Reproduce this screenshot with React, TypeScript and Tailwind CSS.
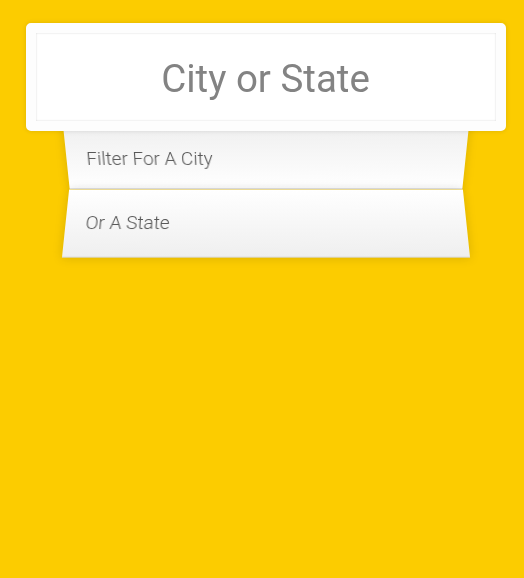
export default function App() {
  return (
    <div className="min-h-[578px] w-full bg-[#fccc00] pt-[13px] pl-[7px]" style={{ fontFamily: '"Liberation Sans", Arial, sans-serif' }}>
      <div className="mx-auto w-[400px]">
        <div className="relative z-10 top-[10px] -ml-[40px] w-[480px] rounded-[5px] border-[10px] border-[#fdfdfd] bg-white shadow-[0_0_5px_rgba(0,0,0,0.12),inset_0_0_2px_rgba(0,0,0,0.19)]">
          <div className="flex h-[88px] items-center justify-center pt-[4px] text-[38.5px] text-[#838383]" style={{ fontFamily: 'Roboto, "Liberation Sans", sans-serif' }}>
            City or State
          </div>
        </div>
        <ul className="relative m-0 p-0" style={{ fontFamily: 'Roboto, "Liberation Sans", sans-serif' }}>
          <li className="flex h-[66px] items-center border-b border-[#D8D8D8] bg-[linear-gradient(to_top,#ffffff_0%,#EFEFEF_100%)] px-[20px] pt-[6px] text-[19px] font-light text-[#585858] shadow-[0_0_10px_rgba(0,0,0,0.14)] [transform:perspective(100px)_rotateX(-3deg)_translateY(3px)]">
            Filter For A City
          </li>
          <li className="flex h-[68px] items-center border-b border-[#D8D8D8] bg-[linear-gradient(to_bottom,#ffffff_0%,#EFEFEF_100%)] px-[20px] pt-[2px] text-[19px] font-light text-[#585858] shadow-[0_0_10px_rgba(0,0,0,0.14)] [transform:perspective(100px)_rotateX(3deg)_translateY(2px)_scale(1.001)]">
            Or A State
          </li>
        </ul>
      </div>
    </div>
  );
}
